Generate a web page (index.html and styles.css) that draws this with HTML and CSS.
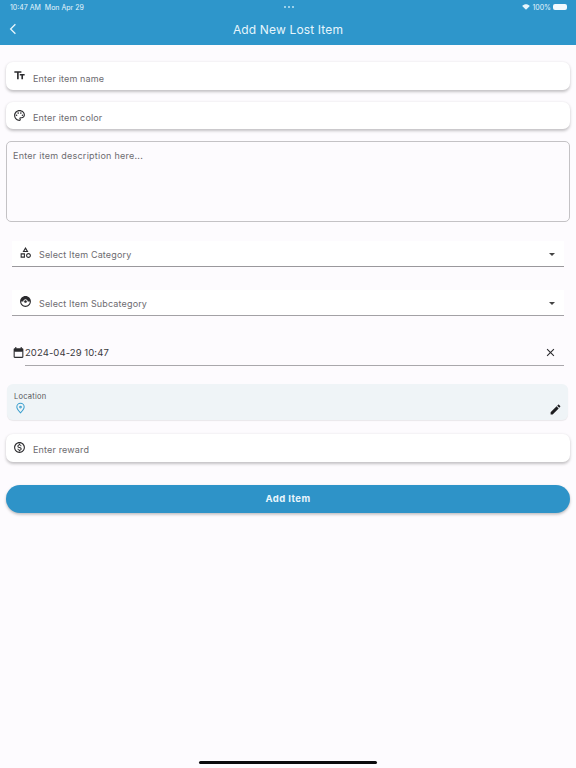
FILE: index.html
```html
<!DOCTYPE html>
<html lang="en">
<head>
  <meta charset="UTF-8">
  <title>Add New Lost Item</title>
  <link rel="stylesheet" href="styles.css">
</head>
<body>
  <header class="app-bar">
    <div class="status-bar">
      <span class="status-time">10:47 AM&nbsp;&nbsp;Mon Apr 29</span>
      <span class="status-dots"><i></i><i></i><i></i></span>
      <span class="status-right">
        <svg class="wifi" viewBox="0 0 24 18"><path d="M12 17.5 0.5 6C7 -0.6 17 -0.6 23.500 6z"/></svg>
        <span>100%</span>
        <span class="battery"></span>
      </span>
    </div>
    <div class="title-bar">
      <svg class="back" viewBox="0 0 12 20"><path d="M10 2 2 10l8 8"/></svg>
      <h1>Add New Lost Item</h1>
    </div>
  </header>

  <main class="form">
    <div class="card first">
      <svg class="icon" viewBox="0 0 24 24"><path d="M2.500 4v3h5v12h3V7h5V4h-13zm19 5h-9v3h3v7h3v-7h3V9z"/></svg>
      <span class="hint">Enter item name</span>
    </div>
    <div class="card second">
      <svg class="icon" viewBox="0 0 24 24"><path d="M12 22C6.490 22 2 17.510 2 12S6.490 2 12 2s10 4 10 9c0 3.310-2.690 6-6 6h-1.770c-.28 0-.5.220-.5.500 0 .120.050.230.130.330.410.470.640 1.060.640 1.670A2.500 2.500 0 0 1 12 22zm0-18c-4.410 0-8 3.590-8 8s3.590 8 8 8c.280 0 .500-.220.500-.500a.540.540 0 0 0-.140-.350c-.410-.460-.630-1.050-.630-1.650a2.500 2.500 0 0 1 2.500-2.500H16c2.210 0 4-1.790 4-4 0-3.860-3.590-7-8-7z"/><circle cx="6.500" cy="11.500" r="1.500"/><circle cx="9.500" cy="7.500" r="1.500"/><circle cx="14.500" cy="7.500" r="1.500"/><circle cx="17.500" cy="11.500" r="1.500"/></svg>
      <span class="hint">Enter item color</span>
    </div>
    <div class="description">
      <span class="hint">Enter item description here...</span>
    </div>

    <div class="dropdown category">
      <svg class="icon" viewBox="0 0 24 24"><path d="M12 2l-5.500 9h11L12 2zm0 3.840L13.930 9h-3.870L12 5.840zM17.500 13c-2.490 0-4.500 2.010-4.500 4.500s2.010 4.500 4.500 4.500 4.500-2.010 4.500-4.500-2.010-4.500-4.500-4.500zm0 7c-1.380 0-2.500-1.120-2.500-2.500s1.120-2.500 2.500-2.500 2.500 1.120 2.500 2.500-1.120 2.500-2.500 2.500zM3 21.500h8v-8H3v8zm2-6h4v4H5v-4z"/></svg>
      <span class="hint">Select Item Category</span>
      <span class="caret"></span>
    </div>
    <div class="dropdown subcategory">
      <svg class="icon" viewBox="0 0 24 24"><path d="M14.500 12c0 1.380-1.120 2.500-2.500 2.500s-2.500-1.120-2.500-2.500 1.120-2.500 2.500-2.500 2.500 1.120 2.500 2.500zm7.500 0c0 5.520-4.480 10-10 10S2 17.520 2 12 6.480 2 12 2s10 4.480 10 10zm-2 0h-4c0-2.210-1.790-4-4-4s-4 1.790-4 4H4c0 4.410 3.590 8 8 8s8-3.590 8-8z"/></svg>
      <span class="hint">Select Item Subcategory</span>
      <span class="caret"></span>
    </div>

    <div class="date-row">
      <svg class="icon date-icon" viewBox="0 0 24 24"><path d="M19 4h-1V2h-2v2H8V2H6v2H5c-1.110 0-1.990.900-1.990 2L3 20c0 1.100.890 2 2 2h14c1.100 0 2-.900 2-2V6c0-1.100-.900-2-2-2zm0 16H5V10h14v10z"/><path d="M5 8h14v2H5zM7 6h2v2H7zM11 6h2v2h-2zM15 6h2v2h-2z"/></svg>
      <div class="date-field">
        <span class="date-value">2024-04-29 10:47</span>
        <svg class="icon close" viewBox="0 0 24 24"><path d="M19 6.410 17.590 5 12 10.590 6.410 5 5 6.410 10.590 12 5 17.590 6.410 19 12 13.410 17.590 19 19 17.590 13.410 12z"/></svg>
      </div>
    </div>

    <div class="location">
      <div class="location-text">
        <span class="location-label">Location</span>
        <svg class="pin" viewBox="0 0 24 24"><path d="M12 22.500C7 17.500 4 13.700 4 9.800a8 8 0 0 1 16 0c0 3.900-3 7.700-8 12.700z"/><circle cx="12" cy="10" r="1.800"/></svg>
      </div>
      <svg class="icon edit" viewBox="0 0 24 24"><path d="M3 17.250V21h3.750L17.810 9.940l-3.750-3.750L3 17.250zM20.710 7.040c.390-.390.390-1.020 0-1.410l-2.340-2.340c-.390-.390-1.020-.390-1.410 0l-1.830 1.830 3.750 3.750 1.830-1.830z"/></svg>
    </div>

    <div class="card reward">
      <svg class="icon" viewBox="0 0 24 24"><path d="M12 2C6.480 2 2 6.480 2 12s4.480 10 10 10 10-4.480 10-10S17.520 2 12 2zm0 18c-4.410 0-8-3.590-8-8s3.590-8 8-8 8 3.590 8 8-3.590 8-8 8zm.310-8.860c-1.770-.450-2.340-.940-2.340-1.670 0-.840.790-1.430 2.100-1.430 1.380 0 1.900.660 1.940 1.640h1.710c-.050-1.340-.870-2.570-2.490-2.970V5H10.900v1.690c-1.510.320-2.720 1.300-2.720 2.810 0 1.790 1.490 2.690 3.660 3.210 1.950.460 2.340 1.150 2.340 1.870 0 .530-.390 1.390-2.100 1.390-1.600 0-2.230-.720-2.320-1.640H8.040c.100 1.700 1.360 2.660 2.860 2.970V19h2.340v-1.670c1.520-.290 2.720-1.160 2.730-2.770-.010-2.200-1.900-2.960-3.660-3.420z"/></svg>
      <span class="hint">Enter reward</span>
    </div>

    <button class="submit">Add Item</button>
  </main>

  <div class="home-bar"></div>
</body>
</html>
```

FILE: styles.css
```css
* {
  box-sizing: border-box;
}
body {
  margin: 0;
  height: 768px;
  overflow: hidden;
  position: relative;
  font-family: Inter, "Liberation Sans", sans-serif;
  background: #fdfbfe;
  color: #1c1b1f;
}

/* top bar */
.app-bar {
  height: 45px;
  background: #2e96cb;
  color: #e6f5fc;
}
.status-bar {
  height: 14px;
  padding: 0 9px 0 10px;
  display: grid;
  grid-template-columns: 1fr auto 1fr;
  align-items: center;
  font-size: 7px;
}
.status-dots {
  display: flex;
  gap: 2px;
}
.status-dots i {
  width: 2px;
  height: 2px;
  border-radius: 50%;
  background: #bfe3f5;
}
.status-right {
  display: flex;
  justify-content: flex-end;
  align-items: center;
  gap: 2px;
}
.wifi {
  width: 8px;
  height: 6px;
  fill: #e6f5fc;
}
.battery {
  width: 14px;
  height: 6px;
  border-radius: 2px;
  background: #f2fafe;
}
.title-bar {
  height: 31px;
  position: relative;
  display: flex;
  justify-content: center;
  align-items: center;
}
.title-bar h1 {
  margin: 0 0 1px;
  font-size: 12px;
  font-weight: 400;
  letter-spacing: 0.15px;
}
.back {
  position: absolute;
  left: 9px;
  top: 9px;
  width: 8px;
  height: 12px;
  fill: none;
  stroke: #e6f5fc;
  stroke-width: 2.200;
}

/* form */
.form {
  padding: 17px 6px 0;
  display: flex;
  flex-direction: column;
}
.icon {
  width: 13px;
  height: 13px;
  flex: none;
  fill: #2b2b2e;
}
.hint {
  font-size: 9px;
  letter-spacing: 0.15px;
  color: #6d6b70;
}
.card {
  height: 28px;
  padding: 4px 0 0 7px;
  display: flex;
  align-items: center;
  gap: 7px;
  background: #fff;
  border-radius: 7px;
  box-shadow: 0 1.500px 3px rgba(0, 0, 0, 0.23);
}
.card .icon {
  margin-top: -5px;
  width: 13px;
  height: 13px;
}
.second {
  margin-top: 12px;
  height: 27px;
}
.description {
  margin-top: 12px;
  height: 81px;
  padding: 6px 6px;
  border: 1px solid #c4c2c5;
  border-radius: 5px;
  line-height: 11px;
}
.description .hint {
  letter-spacing: 0.25px;
}
.dropdown {
  margin: 0 6px;
  height: 26px;
  padding: 2px 9px 0 7px;
  display: flex;
  align-items: center;
  gap: 7px;
  background: #fff;
  border-bottom: 1px solid #9a989c;
}
.category {
  margin-top: 19px;
}
.subcategory {
  margin-top: 23px;
  border-bottom: 1px solid #a3a1a5;
}
.dropdown .icon {
  margin-top: -4px;
}
.caret {
  margin-left: auto;
  border-left: 3px solid transparent;
  border-right: 3px solid transparent;
  border-top: 3px solid #444;
}
.date-row {
  margin: 24px 6px 0 1px;
  height: 26px;
  display: flex;
  align-items: flex-start;
  padding-left: 5px;
}
.date-icon {
  margin-top: 6px;
  width: 13px;
  height: 13px;
}
.date-field {
  flex: 1;
  height: 26px;
  padding: 0 7px 0 0;
  display: flex;
  justify-content: space-between;
  align-items: center;
  border-bottom: 1px solid #a9a7ab;
}
.date-value {
  font-size: 9.500px;
  letter-spacing: 0.08px;
  color: #3b3a3e;
}
.close {
  width: 13px;
  height: 13px;
}
.location {
  margin: 18px 2px 0 1px;
  height: 36px;
  padding: 8px 6px 0 7px;
  display: flex;
  justify-content: space-between;
  background: #eff4f7;
  border-radius: 6px;
  box-shadow: 0 1px 1px rgba(0, 0, 0, 0.08);
}
.location-text {
  display: flex;
  flex-direction: column;
}
.location-label {
  font-size: 7.500px;
  letter-spacing: 0.25px;
  line-height: 10px;
  color: #555459;
}
.pin {
  width: 11px;
  height: 12px;
  margin-left: 1px;
  fill: none;
  stroke: #3a9fce;
  stroke-width: 2.200;
}
.edit {
  margin-top: 11px;
  width: 13px;
  height: 13px;
  fill: #1d1d20;
}
.reward {
  margin-top: 14px;
  padding-top: 3px;
}
.submit {
  margin-top: 23px;
  height: 28px;
  padding: 0 0 2px;
  border: 0;
  border-radius: 14px;
  background: #2e93c8;
  box-shadow: 0 1.500px 3px rgba(0, 0, 0, 0.26);
  color: #e8f6fd;
  font-family: inherit;
  font-size: 9.500px;
  font-weight: 700;
  letter-spacing: 0.45px;
}

.home-bar {
  position: absolute;
  left: 199px;
  bottom: 4px;
  width: 178px;
  height: 3px;
  border-radius: 2px;
  background: #0b0b0d;
}
```
